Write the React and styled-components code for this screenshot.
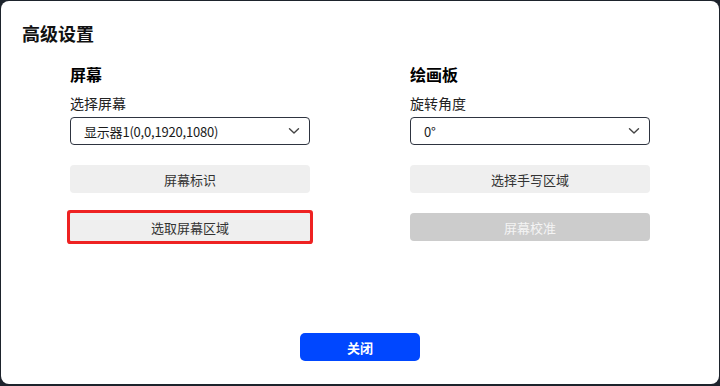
import React from 'react';
import styled, { createGlobalStyle } from 'styled-components';

const GlobalStyle = createGlobalStyle`
  html, body {
    margin: 0;
    padding: 0;
    background: #1d232c;
  }
  body {
    font-family: 'Noto Sans CJK SC', 'Noto Sans', sans-serif;
    color: #1a1a1a;
  }
`;

const Dialog = styled.div`
  box-sizing: border-box;
  width: 718px;
  height: 383px;
  margin: 1px 1px 0 1px;
  background: #fff;
  border-radius: 8px;
  display: flex;
  flex-direction: column;
`;

const Title = styled.h1`
  margin: 0;
  padding: 19px 21px 0;
  font-size: 18px;
  line-height: 26px;
  font-weight: 700;
  color: #111;
`;

const Columns = styled.div`
  display: flex;
  justify-content: center;
  gap: 100px;
  margin-top: 16px;
`;

const Column = styled.section`
  width: 240px;
  display: flex;
  flex-direction: column;
`;

const SectionTitle = styled.h2`
  margin: 0;
  font-size: 16px;
  line-height: 24px;
  font-weight: 700;
  color: #000;
`;

const Label = styled.div`
  margin-top: 7px;
  font-size: 14px;
  line-height: 20px;
  color: #222;
`;

const Select = styled.div`
  box-sizing: border-box;
  margin-top: 4px;
  height: 28px;
  border: 1px solid #2e3440;
  border-radius: 4px;
  display: flex;
  align-items: center;
  justify-content: space-between;
  padding: 0 9px 0 13px;
  font-size: 13px;
  letter-spacing: -0.2px;
  color: #1a1a1a;
  font-family: 'Noto Sans CJK SC', 'Noto Sans', sans-serif;
`;

const Button = styled.button`
  box-sizing: border-box;
  margin-top: ${(p) => p.$gap || 20}px;
  height: 28px;
  width: 100%;
  border: none;
  border-radius: ${(p) => (p.$focused ? 1 : 4)}px;
  background: ${(p) => (p.disabled ? '#cccccc' : '#efefef')};
  color: ${(p) => (p.disabled ? '#f4f4f4' : '#333')};
  font-family: 'Noto Sans CJK SC', 'Noto Sans', sans-serif;
  font-size: 13px;
  box-shadow: ${(p) => (p.$focused ? '0 0 0 3px #ee2222' : 'none')};
  padding: 0;
`;

const Footer = styled.div`
  margin-top: auto;
  padding-bottom: 23px;
  display: flex;
  justify-content: center;
`;

const PrimaryButton = styled.button`
  width: 120px;
  height: 28px;
  border: none;
  border-radius: 5px;
  background: #0047ff;
  color: #fff;
  font-family: 'Noto Sans CJK SC', 'Noto Sans', sans-serif;
  font-size: 13px;
  font-weight: 700;
`;

const Chevron = () => (
  <svg width="12" height="8" viewBox="0 0 12 8">
    <path d="M1.5 1.8 L6 6 L10.5 1.8" fill="none" stroke="#444" strokeWidth="1.4" strokeLinecap="round" strokeLinejoin="round" />
  </svg>
);

export default function App() {
  return (
    <>
      <GlobalStyle />
      <Dialog>
        <Title>高级设置</Title>
        <Columns>
          <Column>
            <SectionTitle>屏幕</SectionTitle>
            <Label>选择屏幕</Label>
            <Select>
              <span>显示器1(0,0,1920,1080)</span>
              <Chevron />
            </Select>
            <Button>屏幕标识</Button>
            <Button $focused>选取屏幕区域</Button>
          </Column>
          <Column>
            <SectionTitle>绘画板</SectionTitle>
            <Label>旋转角度</Label>
            <Select>
              <span>0°</span>
              <Chevron />
            </Select>
            <Button>选择手写区域</Button>
            <Button disabled>屏幕校准</Button>
          </Column>
        </Columns>
        <Footer>
          <PrimaryButton>关闭</PrimaryButton>
        </Footer>
      </Dialog>
    </>
  );
}
